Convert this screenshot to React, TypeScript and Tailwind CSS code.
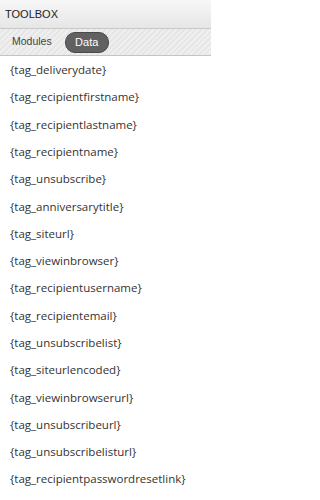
import React from "react";

const tags = [
  "{tag_deliverydate}",
  "{tag_recipientfirstname}",
  "{tag_recipientlastname}",
  "{tag_recipientname}",
  "{tag_unsubscribe}",
  "{tag_anniversarytitle}",
  "{tag_siteurl}",
  "{tag_viewinbrowser}",
  "{tag_recipientusername}",
  "{tag_recipientemail}",
  "{tag_unsubscribelist}",
  "{tag_siteurlencoded}",
  "{tag_viewinbrowserurl}",
  "{tag_unsubscribeurl}",
  "{tag_unsubscribelisturl}",
  "{tag_recipientpasswordresetlink}",
];

export default function App() {
  return (
    <div className="w-[211px] h-[500px] bg-white overflow-hidden font-['Open_Sans',sans-serif]">
      <div className="h-[29px] flex items-center pl-[5px] bg-gradient-to-b from-[#f7f7f7] to-[#e6e6e6] border-b border-[#c8c8c8] text-[11px] text-[#222] font-['Liberation_Sans',sans-serif]">
        TOOLBOX
      </div>
      <div className="h-[27px] flex items-center bg-[#ececec] bg-[repeating-linear-gradient(135deg,#efefef_0px,#efefef_2px,#e6e6e6_2px,#e6e6e6_4px)] border-b border-[#c4c4c4] font-['Liberation_Sans',sans-serif] text-[10.5px]">
        <span className="ml-[12px] text-[#444]">Modules</span>
        <span className="ml-[13px] h-[21px] w-[44px] flex items-center justify-center rounded-[10px] bg-[#616161] border border-[#4a4a4a] text-white text-[11px]">
          Data
        </span>
      </div>
      <div className="flex flex-col">
        {tags.map((t) => (
          <div key={t} className="h-[27.3px] flex items-center pl-[10px] text-[11.5px] text-[#333]">
            {t}
          </div>
        ))}
      </div>
    </div>
  );
}
